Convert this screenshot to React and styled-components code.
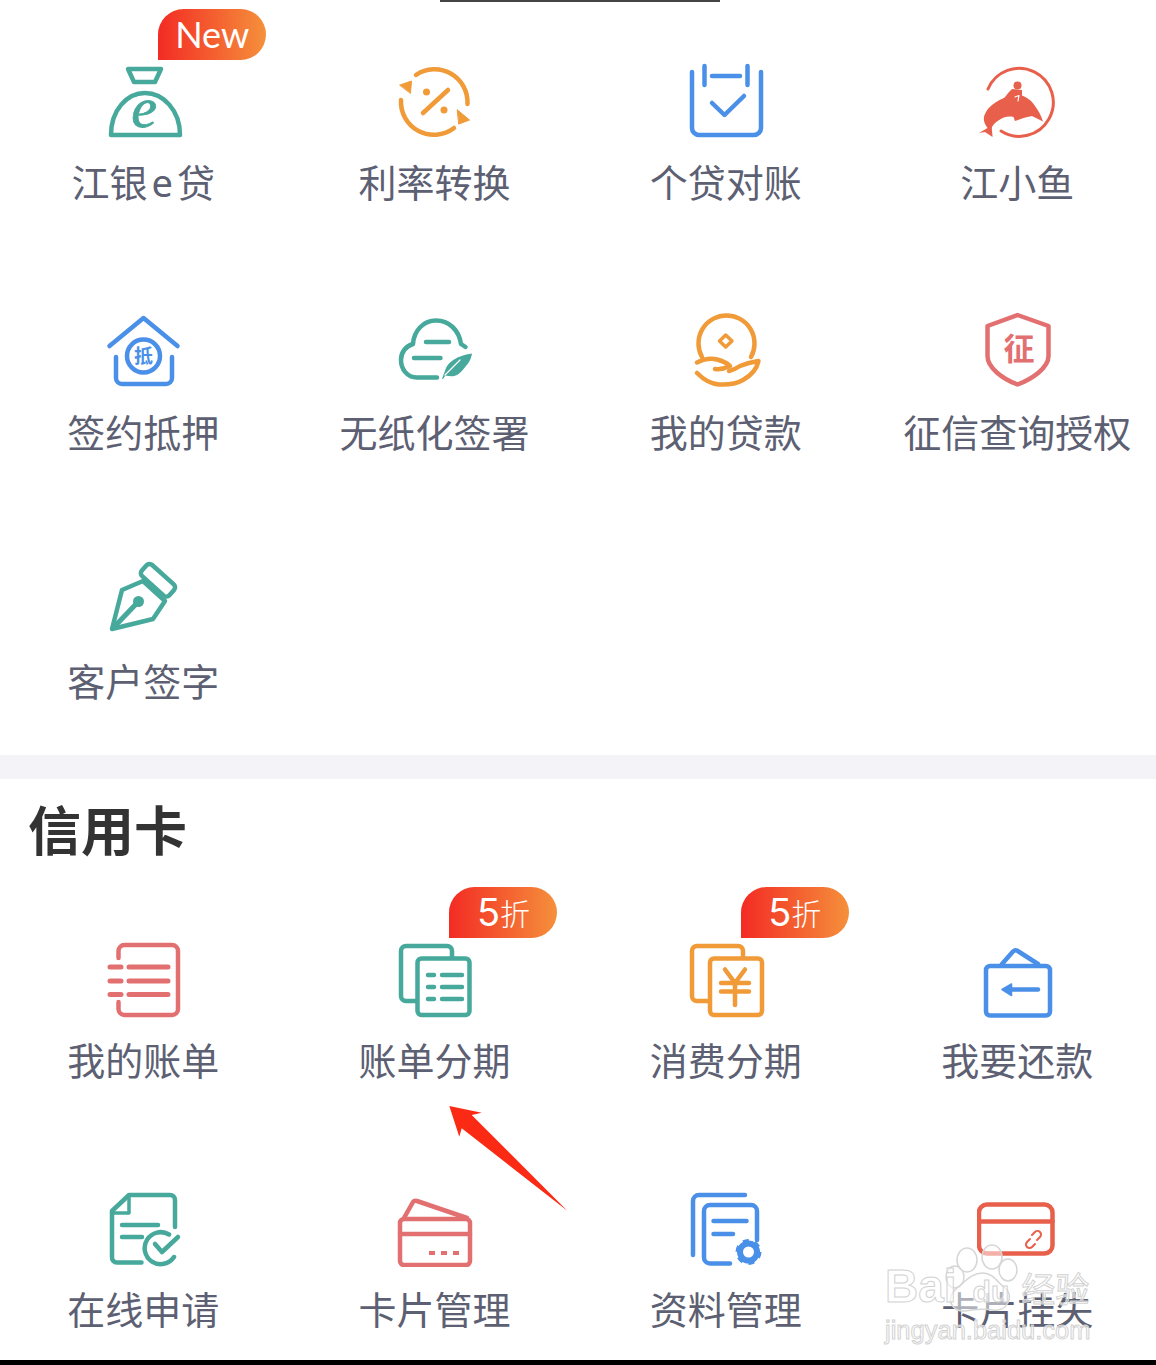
import React from 'react';
import styled, { createGlobalStyle } from 'styled-components';

const TEAL = '#46a99b';
const ORANGE = '#f09a38';
const BLUE = '#4a90e8';
const RED = '#e37070';
const CORAL = '#e8604c';

const GlobalStyle = createGlobalStyle`
  html, body {
    margin: 0;
    padding: 0;
    background: #fff;
  }
`;
const Page = styled.div`
  position: relative;
  display: flex;
  flex-direction: column;
  width: 1156px;
  height: 1365px;
  overflow: hidden;
  background: #fff;
  font-family: "Noto Sans CJK SC", "Noto Sans", sans-serif;
`;
const TopLine = styled.div`
  width: 280px;
  height: 2px;
  margin-left: 440px;
  background: #444;
`;
const Grid = styled.div`
  display: grid;
  grid-template-columns: repeat(4, 291.33px);
  row-gap: 105px;
  margin-left: -2.5px;
  padding-top: ${(p) => p.$top}px;
  padding-bottom: ${(p) => p.$bottom}px;
`;
const Cell = styled.div`
  display: flex;
  flex-direction: column;
  align-items: center;
`;
const IconBox = styled.div`
  position: relative;
  width: 80px;
  height: 80px;
`;
const Label = styled.div`
  margin-top: 18px;
  font-size: 38px;
  line-height: 46px;
  font-weight: 400;
  color: #5c6072;
  white-space: nowrap;
`;
const Latin = styled.span`
  padding: 0 4px;
  font-family: "Noto Sans", sans-serif;
`;
const Badge = styled.div`
  position: absolute;
  left: 55px;
  top: -51px;
  display: flex;
  align-items: center;
  justify-content: center;
  width: 108px;
  height: 51px;
  border-radius: 26px 26px 26px 0;
  background: linear-gradient(90deg, #f32b24 0%, #f5903b 100%);
  color: #fff;
  font-family: Lato, "Noto Sans CJK SC", sans-serif;
  font-size: 36px;
  font-weight: 400;
  line-height: 51px;
  white-space: nowrap;
`;
const BadgeNum = styled.span`
  font-family: Inter, sans-serif;
  font-size: 38px;
  font-weight: 400;
`;
const BadgeHan = styled.span`
  font-family: "Noto Sans CJK SC", sans-serif;
  font-size: 30px;
  font-weight: 300;
`;
const Divider = styled.div`
  height: 24px;
  background: #f3f3f8;
`;
const Heading = styled.h2`
  margin: 19px 0 0;
  padding-left: 28px;
  font-size: 53px;
  line-height: 60px;
  font-weight: 700;
  color: #333;
`;
const BottomBar = styled.div`
  height: 5px;
  margin-top: auto;
  background: #000;
`;
const Icon = styled.svg.attrs({ viewBox: '0 0 80 80', width: 80, height: 80 })`
  display: block;
  fill: none;
  stroke: ${(p) => p.$color};
  stroke-width: 4.5;
  stroke-linecap: round;
  stroke-linejoin: round;
`;
const IconText = styled.text`
  fill: ${(p) => p.$color};
  stroke: none;
  font-family: "Noto Sans CJK SC", sans-serif;
  font-weight: 700;
  font-size: ${(p) => p.$size}px;
  text-anchor: middle;
`;
const LetterE = styled.text`
  fill: ${TEAL};
  stroke: ${TEAL};
  stroke-width: 0.8;
  font-family: "Liberation Serif", serif;
  font-style: italic;
  font-weight: 400;
  font-size: 58px;
  text-anchor: middle;
`;
const ArrowMark = styled.svg`
  position: absolute;
  left: 445px;
  top: 1100px;
`;
const Watermark = styled.div`
  position: absolute;
  left: 885px;
  top: 1240px;
  width: 210px;
  height: 105px;
  font-family: "Liberation Sans", sans-serif;
  font-weight: 700;
  color: rgba(255, 255, 255, 0.6);
  -webkit-text-stroke: 1px #d2d2d2;
`;
const Paw = styled.svg`
  position: absolute;
  left: 0;
  top: 0;
  fill: rgba(255, 255, 255, 0.5);
  stroke: #d6d6d6;
  stroke-width: 1.5;
`;
const MarkRow = styled.div`
  position: relative;
  display: flex;
  align-items: baseline;
  height: 78px;
  padding-top: 22px;
  box-sizing: border-box;
  font-size: 46px;
  line-height: 48px;
`;
const MarkDu = styled.span`
  margin-left: 16px;
  font-size: 30px;
`;
const MarkHan = styled.span`
  margin-left: 12px;
  font-family: "Noto Sans CJK SC", sans-serif;
  font-size: 34px;
  font-weight: 400;
`;
const MarkUrl = styled.div`
  position: relative;
  font-size: 25.5px;
  font-weight: 400;
  line-height: 24px;
  white-space: nowrap;
`;

const Loan = () => (
  <Icon $color={TEAL}>
    <path d="M25 9H58L52 22H31Z" />
    <path d="M8 75H77C77 50 60 33 42 33C24 33 8 50 8 75Z" />
    <LetterE x="41" y="67">e</LetterE>
  </Icon>
);
const Rate = () => (
  <Icon $color={ORANGE}>
    <path d="M22 15A33 33 0 0 1 73.5 44" />
    <path d="M60 68A33 33 0 0 1 7 40" />
    <path d="M63.5 50L75.5 60L65 64Z" fill={ORANGE} strokeWidth="1" />
    <path d="M6 25L17.5 21L16.5 33Z" fill={ORANGE} strokeWidth="1" />
    <path d="M29 53L54 30" />
    <circle cx="32.5" cy="32" r="3.5" fill={ORANGE} stroke="none" />
    <circle cx="50" cy="50" r="3.5" fill={ORANGE} stroke="none" />
  </Icon>
);
const Statement = () => (
  <Icon $color={BLUE}>
    <path d="M6 12V68a7 7 0 0 0 7 7H68a7 7 0 0 0 7-7V12" />
    <path d="M18.5 6V25M61.5 6V25M26 16H54" />
    <path d="M26 43L38.5 55L58 36" />
  </Icon>
);
const Dolphin = () => (
  <Icon $color={CORAL}>
    <path d="M11 29A34 34 0 1 1 24 71" strokeWidth="3" />
    <path
      d="M2 73L10.5 68C7 63 6 59 7.5 55C9.5 50 12 47.5 15 45C20 41 25 38.5 30 37C35 35.5 39 35 43 35C50 37 55 41 58 46C61 50 64 55 66 61.5L55 56C52 57 49 57 46.5 58L38 61L36.5 57C31 56 27 57 23 59.5C19 62 16.5 64 15 67C14.5 70 15.5 73 15.5 77L8 72Z"
      fill={CORAL}
      stroke="none"
    />
    <circle cx="40.5" cy="25.5" r="4" fill={CORAL} stroke="none" />
    <path d="M35 29L45 30L45 38L26 39.5L32 32Z" fill={CORAL} stroke="none" />
    <path d="M38 37L42 35.5L41 41" stroke="#fff" strokeWidth="1.2" />
  </Icon>
);
const House = () => (
  <Icon $color={BLUE}>
    <path d="M6.5 36L40.5 8L74.5 36" />
    <path d="M13 47V68a6 6 0 0 0 6 6H63a6 6 0 0 0 6-6V47" />
    <circle cx="40.5" cy="46" r="16.5" />
    <IconText $color={BLUE} $size={19} x="40.5" y="53">抵</IconText>
  </Icon>
);
const Paperless = () => (
  <Icon $color={TEAL}>
    <path d="M43 67.5H23C13 67.5 7 59 7 50C7 42 12 36 19 34C20 20 30 10.5 42 10.5C55 10.5 65 20 67 34L71.5 37" />
    <path d="M32 32H55M20 48H46.5" />
    <path
      d="M48 69L52 58C55 52 62 46 78 43.5C77 50 74 54 71.5 56.5C68 61 65 65 60 66C57 66.5 54 66 51.5 65.5L49 69Z"
      fill={TEAL}
      stroke="none"
    />
    <path d="M51 65L66 50" stroke="#fff" strokeWidth="1.2" />
  </Icon>
);
const MyLoan = () => (
  <Icon $color={ORANGE}>
    <path d="M16 47A28 28 0 1 1 65 47" />
    <path d="M39.7 25L46 31L39.7 37L33.5 31Z" strokeWidth="3.5" />
    <path d="M11 52.5C18 49 25 48 31 49.5C37 51 42 54 44 56C38 59 33 59.5 29 59" />
    <path d="M11 63C17 69 24 74 33 74.5C42 75 50 74 57 70C66 65 71 58 72.5 51C66 52 60 53.5 54 56C51 58 47 60 43 61" />
  </Icon>
);
const Shield = () => (
  <Icon $color={RED}>
    <path d="M40.5 5L71.5 16V46C71.5 58 55 69 40.5 74.5C26 69 10.5 58 10.5 46V16Z" />
    <IconText $color={RED} $size={31} x="42" y="50">征</IconText>
  </Icon>
);
const Pen = () => (
  <Icon $color={TEAL}>
    <rect x="36" y="14" width="37" height="15" rx="4" transform="rotate(42 55 22)" />
    <path d="M9 70L19 31L40 22L62 42L50 60Z" />
    <path d="M12 67L35 43" strokeWidth="5" />
    <circle cx="35.5" cy="42.5" r="5.5" fill={TEAL} stroke="none" />
  </Icon>
);
const Bills = () => (
  <Icon $color={RED}>
    <path d="M15.5 20V13a6 6 0 0 1 6-6H69a6 6 0 0 1 6 6V71a6 6 0 0 1-6 6H21.5a6 6 0 0 1-6-6V64" />
    <path
      d="M7 29H18M7 43H18M7 56.5H18M26 29H65M26 43H65M26 56.5H65"
      strokeWidth="5"
    />
  </Icon>
);
const Installment = () => (
  <Icon $color={TEAL}>
    <path d="M58 20V13a5 5 0 0 0-5-5H12a5 5 0 0 0-5 5V58a5 5 0 0 0 5 5H23" />
    <rect x="23.5" y="20.5" width="52" height="56.5" rx="4" />
    <path
      d="M34 37H40M34 49H40M34 61H40M48 37H68M48 49H68M48 61H68"
      strokeWidth="4.5"
    />
  </Icon>
);
const Consume = () => (
  <Icon $color={ORANGE}>
    <path d="M57 20V13a5 5 0 0 0-5-5H11a5 5 0 0 0-5 5V58a5 5 0 0 0 5 5H23" />
    <rect x="24" y="20.5" width="52" height="56.5" rx="4" />
    <path d="M39 31.5L49 45L59 31.5M35 45H63M35 53.5H63M49 45V67" />
  </Icon>
);
const Repay = () => (
  <Icon $color={BLUE}>
    <rect x="9" y="28" width="64" height="49.5" rx="4" />
    <path d="M25 26L36 13.5Q38.5 11 41.5 13.5L61 26" />
    <path d="M61 51.5H30" />
    <path d="M25 51.5L34.5 46V57.5Z" fill={BLUE} strokeWidth="1.5" />
  </Icon>
);
const Apply = () => (
  <Icon $color={TEAL}>
    <path d="M72 40V13a5 5 0 0 0-5-5H26L9 24V70a5 5 0 0 0 5 5.5H38.5" />
    <path d="M26 9V26H9" strokeWidth="3.5" />
    <path d="M19 38H55M19 50H39" />
    <path d="M71 70A16 16 0 1 1 66 47.5" />
    <path d="M52 57L59 65L75 50" />
  </Icon>
);
const CardManage = () => (
  <Icon $color={RED}>
    <rect x="6" y="32" width="70" height="46" rx="4" />
    <path d="M6 47H76" />
    <path d="M10 31L19 15Q20 13 23 14L73 31" />
    <path d="M35 66H41M47 66H53M59 66H65" strokeWidth="4" strokeLinecap="butt" />
  </Icon>
);
const Files = () => (
  <Icon $color={BLUE}>
    <path d="M7 68V14a6 6 0 0 1 6-6H59" />
    <path d="M44 76.5H24a6 6 0 0 1-6-6V24a6 6 0 0 1 6-6H65a6 6 0 0 1 6 6V53" />
    <path d="M27.5 34H60.5M27.5 47H47" />
    <circle cx="62.5" cy="65" r="8.5" strokeWidth="6" />
    <circle
      cx="62.5"
      cy="65"
      r="11.5"
      strokeWidth="3"
      strokeDasharray="6 6.04"
      strokeLinecap="butt"
    />
  </Icon>
);
const CardLost = () => (
  <Icon $color={CORAL}>
    <rect x="2" y="17.5" width="73.5" height="49" rx="8" />
    <path d="M2 34.5H75.5" />
    <path
      d="M53 52l-3 3a3.5 3.5 0 0 0 5 5l3-3M60 53l3-3a3.5 3.5 0 0 0-5-5l-3 3"
      strokeWidth="2"
    />
  </Icon>
);

const loans = [
  { icon: Loan, label: <>江银<Latin>e</Latin>贷</>, badge: 'New' },
  { icon: Rate, label: '利率转换' },
  { icon: Statement, label: '个贷对账' },
  { icon: Dolphin, label: '江小鱼' },
  { icon: House, label: '签约抵押' },
  { icon: Paperless, label: '无纸化签署' },
  { icon: MyLoan, label: '我的贷款' },
  { icon: Shield, label: '征信查询授权' },
  { icon: Pen, label: '客户签字' },
];
const fiveOff = <><BadgeNum>5</BadgeNum><BadgeHan>折</BadgeHan></>;
const cards = [
  { icon: Bills, label: '我的账单' },
  { icon: Installment, label: '账单分期', badge: fiveOff },
  { icon: Consume, label: '消费分期', badge: fiveOff },
  { icon: Repay, label: '我要还款' },
  { icon: Apply, label: '在线申请' },
  { icon: CardManage, label: '卡片管理' },
  { icon: Files, label: '资料管理' },
  { icon: CardLost, label: '卡片挂失' },
];

const Item = ({ icon: Glyph, label, badge }) => (
  <Cell>
    <IconBox>
      <Glyph />
      {badge && <Badge>{badge}</Badge>}
    </IconBox>
    <Label>{label}</Label>
  </Cell>
);

const App = () => (
  <Page>
    <GlobalStyle />
    <TopLine />
    <Grid $top={58} $bottom={52}>
      {loans.map((item, i) => (
        <Item key={i} {...item} />
      ))}
    </Grid>
    <Divider />
    <Heading>信用卡</Heading>
    <Grid $top={80} $bottom={0}>
      {cards.map((item, i) => (
        <Item key={i} {...item} />
      ))}
    </Grid>
    <BottomBar />
    <ArrowMark width="126" height="114" viewBox="0 0 126 114">
      <path
        d="M4.3 6L36.7 12.7L26.7 15L122.3 110.7L16.7 28.3L14.3 36.7Z"
        fill="#fb2a14"
      />
    </ArrowMark>
    <Watermark>
      <Paw width="210" height="105" viewBox="0 0 210 105">
        <ellipse cx="70" cy="37" rx="9" ry="11" />
        <ellipse cx="82" cy="20" rx="10" ry="12" />
        <ellipse cx="107" cy="17" rx="10" ry="12" />
        <ellipse cx="123" cy="30" rx="9" ry="11" />
        <path d="M98 33C108 33 112 42 120 48C130 56 122 72 108 70C100 69 90 69 80 71C66 72 60 58 72 48C80 42 86 33 98 33Z" />
      </Paw>
      <MarkRow>
        Bai
        <MarkDu>du</MarkDu>
        <MarkHan>经验</MarkHan>
      </MarkRow>
      <MarkUrl>jingyan.baidu.com</MarkUrl>
    </Watermark>
  </Page>
);
export default App;
